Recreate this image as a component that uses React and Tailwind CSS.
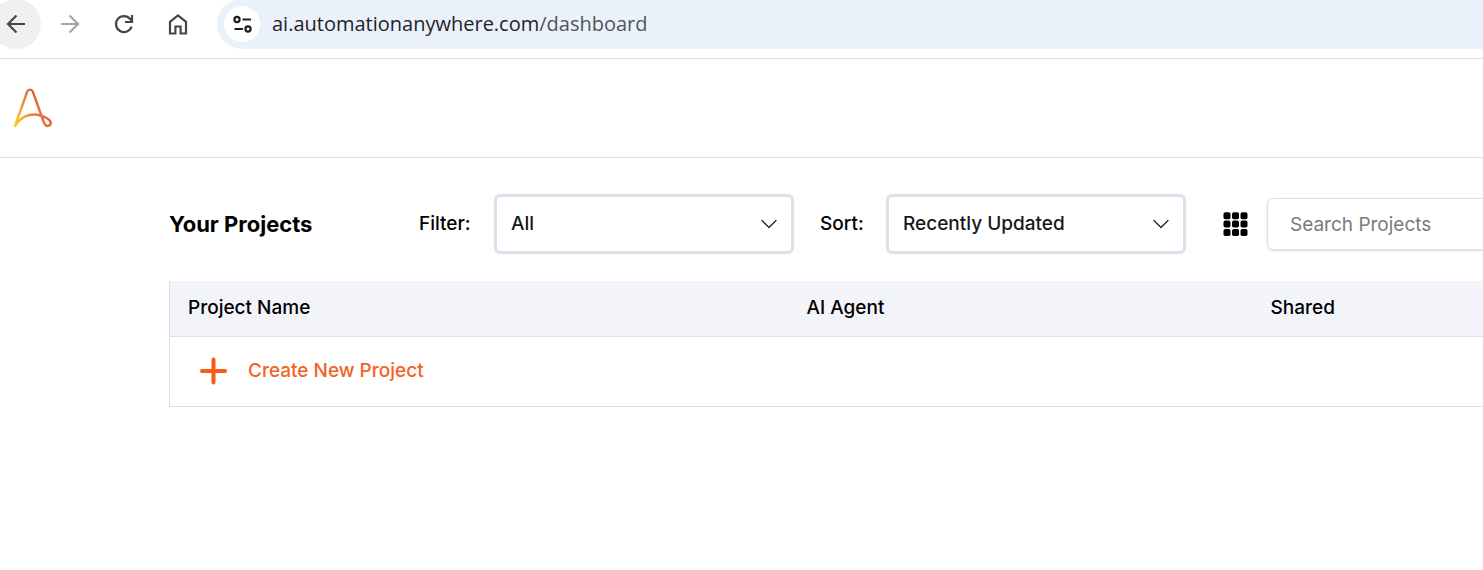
import React, { useState } from 'react';

const AgentLogo = () => (
  <svg width="40" height="42" viewBox="0 0 40 42" fill="none" aria-hidden="true">
    <defs>
      <linearGradient id="logoStroke" x1="1" y1="40" x2="33" y2="22" gradientUnits="userSpaceOnUse">
        <stop offset="0" stopColor="#f6d61c" />
        <stop offset="0.25" stopColor="#f3bc2a" />
        <stop offset="0.6" stopColor="#e98440" />
        <stop offset="1" stopColor="#dc5a3c" />
      </linearGradient>
    </defs>
    <path
      d="M2 39 L14.2 4.6 C15.2 2 18.8 2 19.8 4.6 L30.3 34 C31.6 37.6 32.5 39.2 34.8 39 C37.8 38.7 38.6 35.4 36.6 33.2 C34.6 31 31.6 29.8 28.3 28.8 C17 25.4 8 29.5 2 39 Z"
      stroke="url(#logoStroke)"
      strokeWidth="2.4"
      strokeLinejoin="round"
    />
  </svg>
);

const NavIcon = ({ children }) => (
  <svg width="24" height="24" viewBox="0 0 24 24" fill="none" stroke="currentColor" strokeWidth="2.2" aria-hidden="true">
    {children}
  </svg>
);

const BrowserBar = () => (
  <div className="h-[59px] border-b border-[#dfdfdf] flex items-start overflow-hidden">
    <div className="-ml-[9px] -mt-px flex gap-1 shrink-0 text-[#444746]">
      <button aria-label="Back" className="size-[50px] rounded-full bg-[#f0f0f0] flex items-center justify-center">
        <NavIcon><path d="M21 12H4.5M12.5 3.5L4 12L12.5 20.5" /></NavIcon>
      </button>
      <button aria-label="Forward" className="size-[50px] flex items-center justify-center text-[#a6a6a6]">
        <NavIcon><path d="M3 12H19.5M11.5 3.5L20 12L11.5 20.5" /></NavIcon>
      </button>
      <button aria-label="Reload" className="size-[50px] flex items-center justify-center">
        <NavIcon>
          <path d="M19.6 14.5A8 8 0 1 1 18.2 7L20 9" />
          <path d="M20 3V10H13" />
        </NavIcon>
      </button>
      <button aria-label="Home" className="size-[50px] flex items-center justify-center">
        <NavIcon><path d="M4 21.5V9.8L12 3.3L20 9.8V21.5H14.6V14.5H9.4V21.5Z" /></NavIcon>
      </button>
    </div>
    <div className="ml-[14px] -mt-px h-[50px] flex-1 rounded-l-full bg-[#ebf1fa] pl-[7px] flex items-center gap-3">
      <button aria-label="View site information" className="size-9 rounded-full bg-white flex items-center justify-center text-[#1f1f1f]">
        <NavIcon>
          <circle cx="7" cy="7.5" r="2.6" />
          <path d="M12.5 7.5H21M4.500 17H13" />
          <circle cx="18" cy="17" r="2.6" />
        </NavIcon>
      </button>
      <a href="#dashboard" className="font-['Open_Sans',sans-serif] text-[20px] leading-7 text-[#1f2328]">
        ai.automationanywhere.com<span className="text-[#50555b]">/dashboard</span>
      </a>
    </div>
  </div>
);

const SelectBox = ({ id, value, onChange, options }) => (
  <div className="relative w-[300px] shrink-0">
    <select
      id={id}
      value={value}
      onChange={(e) => onChange(e.target.value)}
      className="w-full h-[60px] appearance-none rounded-md border-3 border-[#dbe1ea] bg-white pl-[14px] pr-10 font-medium text-[#15181c] outline-none"
    >
      {options.map(option => (
        <option key={option}>{option}</option>
      ))}
    </select>
    <svg className="absolute right-4 top-[21px] pointer-events-none" width="18" height="18" viewBox="0 0 18 18" fill="none" stroke="#212529" strokeWidth="1.3" strokeLinecap="round" strokeLinejoin="round" aria-hidden="true">
      <path d="M2 5.5L9 12.5L16 5.5" />
    </svg>
  </div>
);

const GridIcon = () => (
  <svg width="25" height="25" viewBox="0 0 25 25" fill="#000" aria-hidden="true">
    {[0.2, 8.6, 17].map(y =>
      [0.5, 9, 17.5].map(x => <rect key={`${x}-${y}`} x={x} y={y} width="7" height="7" rx="1.8" />)
    )}
  </svg>
);

const App = () => {
  const [filter, setFilter] = useState('All');
  const [sort, setSort] = useState('Recently Updated');
  const [search, setSearch] = useState('');

  return (
    <div className="min-h-screen bg-white text-black font-['Inter',sans-serif] text-[19px] leading-6 overflow-x-hidden">
      <BrowserBar />

      <header className="h-[99px] border-b border-[#dfe0e3] px-[13px] flex items-center">
        <a href="#home" aria-label="Home">
          <AgentLogo />
        </a>
      </header>

      <main className="pl-[169px] pt-9">
        {/* Filters and search */}
        <div className="flex items-center">
          <h1 className="w-[250px] shrink-0 text-[22px] font-bold">Your Projects</h1>
          <label htmlFor="filter" className="w-[75px] shrink-0 font-medium">Filter:</label>
          <SelectBox id="filter" value={filter} onChange={setFilter} options={['All', 'Owned', 'Shared']} />
          <label htmlFor="sort" className="ml-[26px] w-[66px] shrink-0 font-medium">Sort:</label>
          <SelectBox id="sort" value={sort} onChange={setSort} options={['Recently Updated', 'Project Name']} />
          <button aria-label="Grid view" className="ml-[37px] mr-[19px] shrink-0">
            <GridIcon />
          </button>
          <input
            type="text"
            aria-label="Search Projects"
            placeholder="Search Projects"
            value={search}
            onChange={(e) => setSearch(e.target.value)}
            className="h-[52px] min-w-0 flex-1 rounded-l-md border border-r-0 border-[#dbe1ea] shadow-sm pl-[22px] placeholder:text-[#757b82] outline-none"
          />
        </div>

        {/* Project list */}
        <table className="mt-[27px] w-full table-fixed border-l border-[#dcdfe8] text-left">
          <thead>
            <tr className="h-[55px] bg-[#f3f4f9] border-b border-[#dcdfe8]">
              <th className="w-[619px] pl-[18px] font-medium">Project Name</th>
              <th className="w-[464px] pl-[18px] font-medium">AI Agent</th>
              <th className="pl-[18px] font-medium">Shared</th>
            </tr>
          </thead>
          <tbody>
            <tr className="h-[70px] border-b border-[#dcdfe8]">
              <td colSpan={3} className="pl-[30px]">
                <button className="flex items-center gap-5 font-medium text-[#f26322]">
                  <svg width="28" height="28" viewBox="0 0 28 28" fill="none" stroke="#fa5a14" strokeWidth="4" strokeLinecap="round" aria-hidden="true">
                    <path d="M13.5 2.5V25.5M2 14H25" />
                  </svg>
                  Create New Project
                </button>
              </td>
            </tr>
          </tbody>
        </table>
      </main>
    </div>
  );
};

export default App;
